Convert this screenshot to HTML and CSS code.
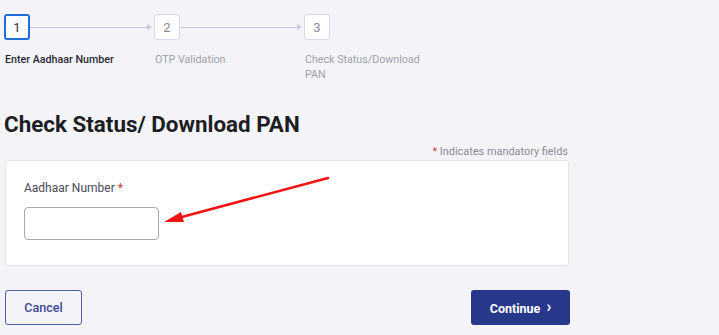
FILE: index.html
```html
<!DOCTYPE html>
<html>
<head>
    <title>Check Status / Download PAN</title>
    <meta name="viewport" content="width=device-width, initial-scale=1">
    <link rel="stylesheet" href="styles.css">
</head>
<body>
    <div class="page">
        <ol class="stepper">
            <li class="step active">
                <div class="step-head">
                    <span class="step-num">1</span>
                    <span class="step-line"></span>
                </div>
                <div class="step-label">Enter Aadhaar Number</div>
            </li>
            <li class="step">
                <div class="step-head">
                    <span class="step-num">2</span>
                    <span class="step-line"></span>
                </div>
                <div class="step-label">OTP Validation</div>
            </li>
            <li class="step">
                <div class="step-head">
                    <span class="step-num">3</span>
                </div>
                <div class="step-label">Check Status/Download PAN</div>
            </li>
        </ol>

        <h1 class="title">Check Status/ Download PAN</h1>
        <p class="mandatory"><span class="req">*</span> Indicates mandatory fields</p>

        <div class="card">
            <label class="field-label" for="aadhaar">Aadhaar Number <span class="req">*</span></label>
            <input id="aadhaar" class="field-input" type="text">
            <svg class="pointer" viewBox="0 0 563 105" width="563" height="105">
                <line x1="322" y1="17" x2="172" y2="57" stroke="#f01414" stroke-width="2.6" stroke-linecap="round"/>
                <polygon points="158,61 175,51 178,61" fill="#f01414"/>
            </svg>
        </div>

        <div class="actions">
            <button class="btn btn-outline">Cancel</button>
            <button class="btn btn-primary">Continue <span class="chev">&#8250;</span></button>
        </div>
    </div>
</body>
</html>
```

FILE: styles.css
```css
* {
    margin: 0;
    padding: 0;
    box-sizing: border-box;
}

body {
    background: #f4f4f8;
    color: #222;
    font-family: Roboto, 'Liberation Sans', sans-serif;
    width: 719px;
    height: 335px;
    overflow: hidden;
}

.page {
    width: 569px;
    padding-left: 4px;
}

/* stepper */
.stepper {
    list-style: none;
    display: flex;
    padding-top: 14px;
    height: 111px;
}

.step {
    width: 150px;
}

.step-head {
    display: flex;
    align-items: center;
}

.step-num {
    width: 26px;
    height: 26px;
    border: 1.5px solid #d9d9ec;
    border-radius: 3px;
    background: #fff;
    color: #8a8a96;
    font-size: 13px;
    display: flex;
    align-items: center;
    justify-content: center;
}

.step.active .step-num {
    border: 2px solid #1f6fd6;
    color: #333;
}

.step-line {
    flex: 1;
    height: 1px;
    background: #c9c9e0;
    margin-right: 3px;
    position: relative;
}

.step-line::after {
    content: '';
    position: absolute;
    right: -1px;
    top: -3px;
    border-left: 5px solid #c9c9e0;
    border-top: 3.5px solid transparent;
    border-bottom: 3.5px solid transparent;
}

.step-label {
    margin-top: 12px;
    padding-left: 1px;
    font-size: 10.7px;
    line-height: 15px;
    color: #a0a0aa;
    width: 130px;
}

.step.active .step-label {
    color: #2a2a36;
    font-weight: 500;
}

/* heading */
.title {
    font-size: 22.4px;
    font-weight: 700;
    color: #1d1d24;
    line-height: 26px;
}

.mandatory {
    text-align: right;
    font-size: 10.9px;
    color: #8a8a96;
    margin-top: 8px;
    line-height: 13px;
    padding-right: 1px;
}

.req {
    color: #d4373f;
}

/* card */
.card {
    position: relative;
    margin-top: 2px;
    margin-left: 1px;
    width: 564px;
    height: 106px;
    background: #fff;
    border: 1px solid #e3e3ee;
    border-radius: 3px;
    padding: 20px 18px;
    display: flex;
    flex-direction: column;
    align-items: flex-start;
}

.field-label {
    font-size: 12px;
    color: #4a4a58;
    line-height: 14px;
}

.field-input {
    margin-top: 12px;
    width: 135px;
    height: 33px;
    border: 1px solid #a9a9b0;
    border-radius: 4px;
    background: #fff;
}

.pointer {
    position: absolute;
    left: 0;
    top: 0;
}

/* actions */
.actions {
    margin-top: 24px;
    margin-left: 1px;
    width: 565px;
    display: flex;
    justify-content: space-between;
}

.btn {
    height: 35px;
    border-radius: 3px;
    font-family: Roboto, 'Liberation Sans', sans-serif;
    font-size: 12.5px;
    font-weight: 500;
    cursor: pointer;
}

.btn-outline {
    width: 77px;
    background: #fff0;
    border: 1.5px solid #4f5ca8;
    color: #3a4894;
}

.btn-primary {
    width: 99px;
    background: #27388a;
    border: none;
    color: #fff;
    font-weight: 700;
}

.chev {
    font-size: 16px;
    margin-left: 3px;
    position: relative;
    top: -1px;
}
```
